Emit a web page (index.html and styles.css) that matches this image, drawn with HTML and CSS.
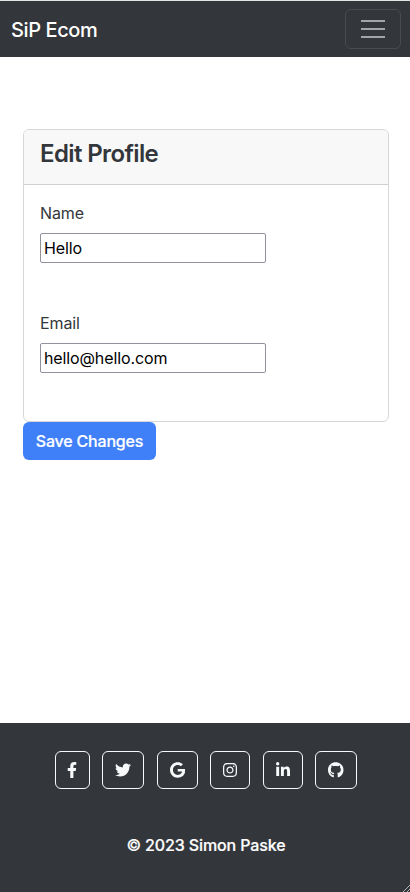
FILE: index.html
```html
<!DOCTYPE html>
<html lang="en">
<head>
<meta charset="utf-8">
<title>SiP Ecom</title>
<link rel="stylesheet" href="styles.css">
</head>
<body>
<nav class="navbar">
  <a class="brand">SiP Ecom</a>
  <button class="toggler" aria-label="Menu"><svg width="30" height="30" viewBox="0 0 30 30"><path stroke="currentColor" stroke-width="2" stroke-linecap="butt" d="M3 7h24M3 15h24M3 23h24"/></svg></button>
</nav>
<main class="content">
  <form>
    <div class="card">
      <div class="card-header"><h4>Edit Profile</h4></div>
      <div class="card-body">
        <div class="field"><label for="name">Name</label><input id="name" type="text" value="Hello"></div>
        <div class="field"><label for="email">Email</label><input id="email" type="text" value="hello@hello.com"></div>
      </div>
    </div>
    <button class="save" type="button">Save Changes</button>
  </form>
</main>
<footer class="footer">
  <div class="social">
    <a class="btn fb"><svg width="10" height="16" viewBox="0 0 320 512"><path d="M279.14 288l14.22-92.66h-88.91v-60.13c0-25.35 12.42-50.06 52.24-50.06h40.42V6.26S260.43 0 225.36 0c-73.22 0-121.08 44.38-121.08 124.72v70.62H22.89V288h81.39v224h100.17V288z"/></svg></a>
    <a class="btn tw"><svg width="16" height="16" viewBox="0 0 512 512"><path d="M459.37 151.716c.325 4.548.325 9.097.325 13.645 0 138.72-105.583 298.558-298.558 298.558-59.452 0-114.68-17.219-161.137-47.106 8.447.974 16.568 1.299 25.34 1.299 49.055 0 94.213-16.568 130.274-44.832-46.132-.975-84.792-31.188-98.112-72.772 6.498.974 12.995 1.624 19.818 1.624 9.421 0 18.843-1.3 27.614-3.573-48.081-9.747-84.143-51.98-84.143-102.985v-1.299c13.969 7.797 30.214 12.67 47.431 13.319-28.264-18.843-46.781-51.005-46.781-87.391 0-19.492 5.197-37.36 14.294-52.954 51.655 63.675 129.3 105.258 216.365 109.807-1.624-7.797-2.599-15.918-2.599-24.04 0-57.828 46.782-104.934 104.934-104.934 30.213 0 57.502 12.67 76.67 33.137 23.715-4.548 46.456-13.32 66.599-25.34-7.798 24.366-24.366 44.833-46.132 57.827 21.117-2.273 41.584-8.122 60.426-16.243-14.292 20.791-32.161 39.308-52.628 54.253z"/></svg></a>
    <a class="btn gg"><svg width="15.25" height="16" viewBox="0 0 488 512"><path d="M488 261.8C488 403.3 391.1 504 248 504 110.8 504 0 393.2 0 256S110.8 8 248 8c66.8 0 123 24.5 166.3 64.9l-67.5 64.9C258.5 52.6 94.3 116.6 94.3 256c0 86.5 69.1 156.6 153.7 156.6 98.2 0 135-70.4 140.8-106.9H248v-85.3h236.1c2.3 12.7 3.9 24.9 3.9 41.4z"/></svg></a>
    <a class="btn ig"><svg width="14" height="16" viewBox="0 0 448 512"><path d="M224.1 141c-63.6 0-114.9 51.3-114.9 114.9s51.3 114.9 114.9 114.9S339 319.5 339 255.9 287.7 141 224.1 141zm0 189.6c-41.1 0-74.7-33.5-74.7-74.7s33.5-74.7 74.7-74.7 74.7 33.5 74.7 74.7-33.6 74.7-74.7 74.7zm146.4-194.3c0 14.9-12 26.8-26.8 26.8-14.9 0-26.8-12-26.8-26.8s12-26.8 26.8-26.8 26.8 12 26.8 26.8zm76.1 27.2c-1.7-35.9-9.9-67.7-36.2-93.9-26.2-26.2-58-34.4-93.9-36.2-37-2.1-147.9-2.1-184.9 0-35.8 1.7-67.6 9.9-93.9 36.1s-34.4 58-36.2 93.9c-2.1 37-2.1 147.9 0 184.9 1.7 35.9 9.9 67.7 36.2 93.9s58 34.4 93.9 36.2c37 2.1 147.9 2.1 184.9 0 35.9-1.7 67.7-9.9 93.9-36.2 26.2-26.2 34.4-58 36.2-93.9 2.1-37 2.1-147.8 0-184.8zM398.8 388c-7.8 19.6-22.9 34.7-42.6 42.6-29.5 11.7-99.5 9-132.1 9s-102.7 2.6-132.1-9c-19.6-7.8-34.7-22.9-42.6-42.6-11.7-29.5-9-99.5-9-132.1s-2.6-102.7 9-132.1c7.8-19.6 22.9-34.7 42.6-42.6 29.5-11.7 99.5-9 132.1-9s102.7-2.6 132.1 9c19.6 7.8 34.7 22.9 42.6 42.6 11.7 29.5 9 99.5 9 132.1s2.7 102.7-9 132.1z"/></svg></a>
    <a class="btn li"><svg width="14" height="16" viewBox="0 0 448 512"><path d="M100.28 448H7.4V148.9h92.88zM53.79 108.1C24.09 108.1 0 83.5 0 53.8a53.79 53.79 0 0 1 107.58 0c0 29.7-24.1 54.3-53.79 54.3zM447.9 448h-92.68V302.4c0-34.7-.7-79.2-48.29-79.2-48.29 0-55.69 37.7-55.69 76.7V448h-92.78V148.9h89.08v40.8h1.3c12.4-23.5 42.69-48.3 87.88-48.3 94 0 111.28 61.9 111.28 142.3V448z"/></svg></a>
    <a class="btn gh"><svg width="15.5" height="16" viewBox="0 0 496 512"><path d="M244.8 8C106.1 8 0 113.3 0 252c0 110.9 69.8 205.8 169.5 239.2 12.8 2.3 17.3-5.6 17.3-12.1 0-6.2-.3-40.4-.3-61.4 0 0-70 15-84.7-29.8 0 0-11.4-29.1-27.8-36.6 0 0-22.9-15.7 1.6-15.4 0 0 24.9 2 38.6 25.8 21.9 38.6 58.6 27.5 72.9 20.9 2.3-16 8.8-27.1 16-33.7-55.9-6.2-112.3-14.3-112.3-110.5 0-27.5 7.6-41.3 23.6-58.9-2.6-6.5-11.1-33.3 2.6-67.9 20.9-6.5 69 27 69 27 20-5.6 41.5-8.5 62.8-8.5s42.8 2.9 62.8 8.5c0 0 48.1-33.6 69-27 13.7 34.7 5.2 61.4 2.6 67.9 16 17.7 25.8 31.5 25.8 58.9 0 96.5-58.9 104.2-114.8 110.5 9.2 7.9 17 22.9 17 46.4 0 33.7-.3 75.4-.3 83.6 0 6.5 4.6 14.4 17.3 12.1C428.2 457.8 496 362.9 496 252 496 113.3 383.5 8 244.8 8z"/></svg></a>
  </div>
  <p class="copy">© 2023 Simon Paske</p>
  <svg class="grip" width="8" height="8" viewBox="0 0 8 8"><path d="M1 8L8 1M5 8L8 5" fill="none" stroke="#b4b4b4" stroke-width="1"/></svg>
</footer>
</body>
</html>
```
FILE: styles.css
```css
* { box-sizing: border-box; }
body {
  margin: 0;
  height: 892px;
  display: flex;
  flex-direction: column;
  overflow: hidden;
  background: #fff;
  color: #33363b;
  font: 16px/24px Inter, sans-serif;
}
.navbar {
  height: 57px;
  border-top: 1px solid #dfe5e3;
  background: #33363b;
  display: flex;
  align-items: center;
  justify-content: space-between;
  padding: 0 9px 0 11px;
}
.brand {
  padding-top: 2px;
  color: #fff;
  font-size: 20px;
  line-height: 30px;
  font-weight: 500;
  letter-spacing: -.4px;
}
.toggler {
  width: 56px;
  height: 40px;
  padding: 0;
  border: 1px solid #484b4f;
  border-radius: 6px;
  background: none;
  color: #a2a5a8;
  display: flex;
  align-items: center;
  justify-content: center;
}
.content { flex: 1; padding: 72px 21px 0 23px; }
.card {
  height: 293px;
  border: 1px solid #d7d7d8;
  border-radius: 6px;
  overflow: hidden;
}
.card-header {
  height: 55px;
  padding: 9px 16px;
  background: #f8f8f8;
  border-bottom: 1px solid #d0d0d1;
}
h4 {
  margin: 0;
  font-size: 24px;
  line-height: 29px;
  font-weight: 600;
  letter-spacing: -.62px;
}
.card-body { padding: 16px; display: flex; flex-direction: column; gap: 48px; }
.field { height: 62px; display: flex; flex-direction: column; align-items: flex-start; gap: 8px; }
label { letter-spacing: -.1px; }
input {
  width: 226px;
  height: 30px;
  padding: 1px 3px;
  border: 1px solid #92929d;
  border-radius: 2px;
  background: #fff;
  color: #000;
  font: 16px/24px Inter, sans-serif;
  letter-spacing: -.12px;
}
.save {
  display: block;
  width: 133px;
  height: 38px;
  padding: 0;
  border: 0;
  border-radius: 6px;
  background: #3f80f8;
  color: #fff;
  font: 500 16px/24px Inter, sans-serif;
  letter-spacing: -.2px;
  -webkit-text-stroke: .2px #fff;
}
.footer {
  position: relative;
  height: 169px;
  padding-top: 28px;
  background: #33363b;
  color: #fff;
}
.social { display: flex; justify-content: center; gap: 12.4px; padding-left: 1.7px; }
.btn {
  height: 38px;
  border: 1px solid #f8f9fa;
  border-radius: 6px;
  display: flex;
  align-items: center;
  justify-content: center;
}
.btn svg { fill: #f8f9fa; }
.fb { width: 35px; }
.tw { width: 42px; }
.gg { width: 41.2px; }
.ig, .li { width: 40px; }
.gh { width: 42px; }
.copy {
  margin: 44px 0 0;
  padding-left: 2px;
  text-align: center;
  font-weight: 500;
  letter-spacing: -.12px;
  -webkit-text-stroke: .2px #fff;
}
.grip { position: absolute; right: 0; bottom: 0; }
```
